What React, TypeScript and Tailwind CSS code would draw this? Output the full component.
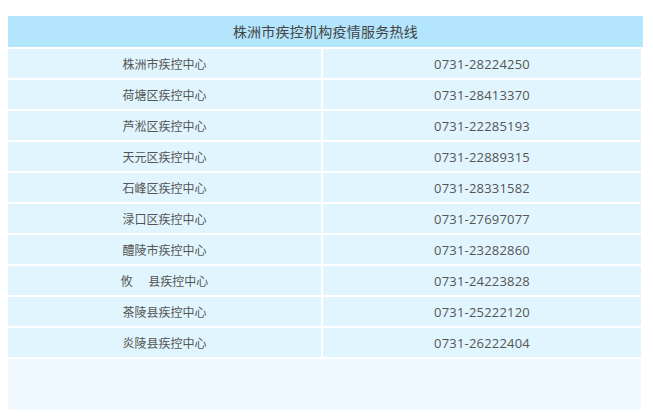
const rows: [string, string][] = [
  ['株洲市疾控中心', '0731-28224250'],
  ['荷塘区疾控中心', '0731-28413370'],
  ['芦淞区疾控中心', '0731-22285193'],
  ['天元区疾控中心', '0731-22889315'],
  ['石峰区疾控中心', '0731-28331582'],
  ['渌口区疾控中心', '0731-27697077'],
  ['醴陵市疾控中心', '0731-23282860'],
  ['攸\u00a0\u00a0\u00a0\u00a0\u00a0县疾控中心', '0731-24223828'],
  ['茶陵县疾控中心', '0731-25222120'],
  ['炎陵县疾控中心', '0731-26222404'],
];

export default function App() {
  return (
    <div
      className="w-[653px] h-[419px] bg-white pl-2 pt-4 text-[#555]"
      style={{ fontFamily: '"Open Sans", "Noto Sans CJK SC", sans-serif' }}
    >
      <div className="w-[635px] flex flex-col gap-[2px]">
        <div className="h-[31px] bg-[#b3e5fc] flex items-center justify-center text-[14px] text-[#444] tracking-[0.25px]">
          株洲市疾控机构疫情服务热线
        </div>
        {rows.map(([name, tel]) => (
          <div key={tel} className="flex gap-[2px] h-[29px] text-[12px]">
            <div className="w-[313px] bg-[#e1f5fe] flex items-center justify-center whitespace-pre pt-[2px]">{name}</div>
            <div className="w-[318px] bg-[#e1f5fe] flex items-center justify-center text-[13px] tracking-[0.2px] pt-[2px]">{tel}</div>
          </div>
        ))}
        <div className="h-[51px] w-[633px] bg-[#f0f9ff]" />
      </div>
    </div>
  );
}
